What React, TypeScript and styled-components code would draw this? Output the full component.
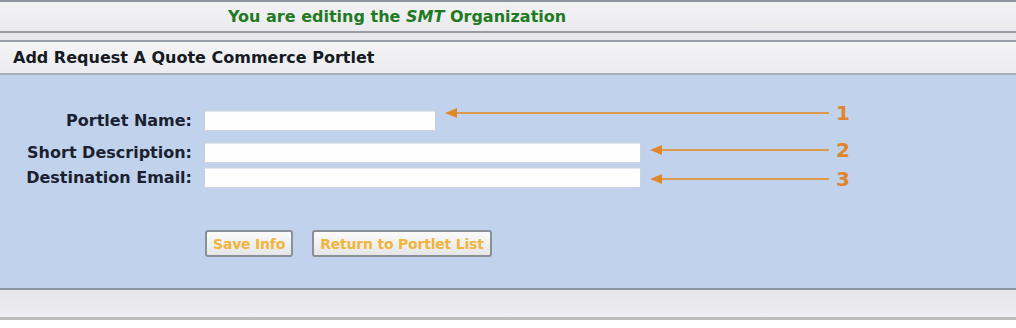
import styled, { createGlobalStyle } from 'styled-components';

const GlobalStyle = createGlobalStyle`
  html, body {
    margin: 0;
    padding: 0;
    background: #ffffff;
  }
  body {
    font-family: 'DejaVu Sans', Verdana, sans-serif;
  }
`;

const Page = styled.div`
  width: 1016px;
  height: 328px;
  overflow: hidden;
  background: #ffffff;
`;

const OrgBar = styled.div`
  height: 29px;
  border-top: 2px solid #8d929b;
  border-bottom: 2px solid #979ba3;
  background: linear-gradient(#f2f2f5, #ebebef);
  display: flex;
  align-items: center;
  padding-left: 228px;
  font-size: 16px;
  font-weight: bold;
  color: #1f7a22;
`;

const Spacer = styled.div`
  height: 7px;
  background: #e7e7eb;
  border-bottom: 2px solid #9a9ea6;
`;

const PortletHeader = styled.div`
  height: 31px;
  background: linear-gradient(#f4f4f6, #ececf0);
  border-bottom: 2px solid #a9adb4;
  display: flex;
  align-items: center;
  padding-left: 13px;
  font-size: 16px;
  font-weight: bold;
  color: #161a22;
`;

const Panel = styled.div`
  height: 215px;
  background: #c1d3ec;
  border-bottom: 2px solid #8c95a2;
  padding-top: 35px;
  box-sizing: border-box;
  display: flex;
  flex-direction: column;
`;

const Fields = styled.div`
  display: flex;
  flex-direction: column;
  width: 850px;
`;

const Row = styled.div<{ $gap: number }>`
  display: flex;
  align-items: center;
  height: 21px;
  margin-top: ${(p) => p.$gap}px;
`;

const Label = styled.div`
  width: 192px;
  text-align: right;
  font-size: 16px;
  font-weight: bold;
  color: #1b2130;
  white-space: nowrap;
`;

const Input = styled.div<{ $width: number }>`
  width: ${(p) => p.$width}px;
  height: 21px;
  margin-left: 12px;
  box-sizing: border-box;
  background: #fefefe;
  border: 1px solid #cdd3dc;
  border-radius: 2px;
  box-shadow: inset 0 1px 0 #e4e8ee;
  flex-shrink: 0;
`;

const Pointer = styled.div<{ $shift: number }>`
  flex: 1;
  display: flex;
  align-items: center;
  margin-left: 9px;
  transform: translateY(${(p) => p.$shift}px);
`;

const Head = styled.div`
  width: 0;
  height: 0;
  border-top: 5px solid transparent;
  border-bottom: 5px solid transparent;
  border-right: 12px solid #e0892a;
  flex-shrink: 0;
`;

const Shaft = styled.div`
  flex: 1;
  height: 2px;
  background: #dc9a4e;
`;

const Number = styled.div`
  width: 14px;
  margin-left: 7px;
  font-size: 20px;
  font-weight: bold;
  color: #e0862a;
  line-height: 1;
`;

const Actions = styled.div`
  display: flex;
  gap: 19px;
  margin-top: 42px;
  padding-left: 205px;
`;

const Button = styled.button`
  height: 27px;
  padding: 0 6px;
  border: 2px solid #8a8f98;
  border-radius: 3px;
  background: linear-gradient(#fbfbfb, #e6e6e6);
  font-family: 'DejaVu Sans', Verdana, sans-serif;
  font-size: 14px;
  font-weight: bold;
  color: #f1b43c;
  letter-spacing: -0.2px;
  cursor: pointer;
`;

const Footer = styled.div`
  height: 27px;
  background: linear-gradient(#e6e5ea, #eeeef2);
  border-bottom: 3px solid #bcbcbc;
`;

const fields = [
  { label: 'Portlet Name:', width: 232, gap: 0, shift: -8, n: '1' },
  { label: 'Short Description:', width: 437, gap: 11, shift: -3, n: '2' },
  { label: 'Destination Email:', width: 437, gap: 4, shift: 1, n: '3' },
];

export default function App() {
  return (
    <Page>
      <GlobalStyle />
      <OrgBar>
        You are editing the&nbsp;<i>SMT</i>&nbsp;Organization
      </OrgBar>
      <Spacer />
      <PortletHeader>Add Request A Quote Commerce Portlet</PortletHeader>
      <Panel>
        <Fields>
          {fields.map((f) => (
            <Row key={f.n} $gap={f.gap}>
              <Label>{f.label}</Label>
              <Input $width={f.width} />
              <Pointer $shift={f.shift}>
                <Head />
                <Shaft />
                <Number>{f.n}</Number>
              </Pointer>
            </Row>
          ))}
        </Fields>
        <Actions>
          <Button>Save Info</Button>
          <Button>Return to Portlet List</Button>
        </Actions>
      </Panel>
      <Footer />
    </Page>
  );
}
